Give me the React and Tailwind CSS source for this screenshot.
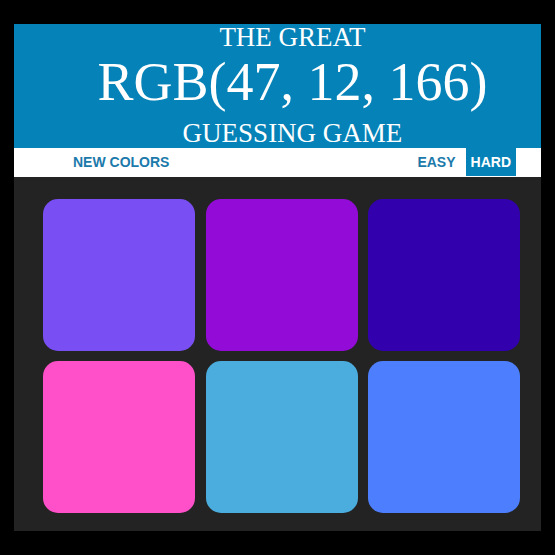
import React from 'react';

const colors = ['#794ff4', '#920bd6', '#3200ad', '#ff50c9', '#4aaddd', '#4d7efd'];

const App = () => {
    return (
        <div className="w-[555px] h-[555px] bg-black pt-[24px] pl-[14px]">
            <div className="w-[527px]">
                {/* Header */}
                <div className="h-[124px] bg-[#0583b8] text-white text-center pl-[30px]" style={{ fontFamily: '"Liberation Serif", "Times New Roman", serif' }}>
                    <div className="text-[27px] leading-[27px]">THE GREAT</div>
                    <div className="text-[54px] leading-[62px]">RGB(47, 12, 166)</div>
                    <div className="text-[27px] leading-[27px] mt-[7px]">GUESSING GAME</div>
                </div>

                {/* Stripe */}
                <div className="h-[29px] bg-white flex items-stretch text-[14px] font-bold pb-[1px]" style={{ fontFamily: '"Liberation Sans", Arial, sans-serif' }}>
                    <button className="ml-[54px] px-[5px] text-[#1c7aab]">NEW COLORS</button>
                    <div className="ml-auto mr-[25px] flex">
                        <button className="px-[5px] mr-[5px] text-[#1c7aab]">EASY</button>
                        <button className="px-[5px] bg-[#0583b8] text-white">HARD</button>
                    </div>
                </div>

                {/* Squares */}
                <div className="bg-[#232323] pt-[22px] pb-[18px] pl-[29px]">
                    <div className="grid grid-cols-[152px_152px_152px] gap-x-[10.5px] gap-y-[10px]">
                        {colors.map((c, i) => (
                            <div key={i} className="h-[152px] rounded-[15px]" style={{ backgroundColor: c }} />
                        ))}
                    </div>
                </div>
            </div>
        </div>
    );
};

export default App;
